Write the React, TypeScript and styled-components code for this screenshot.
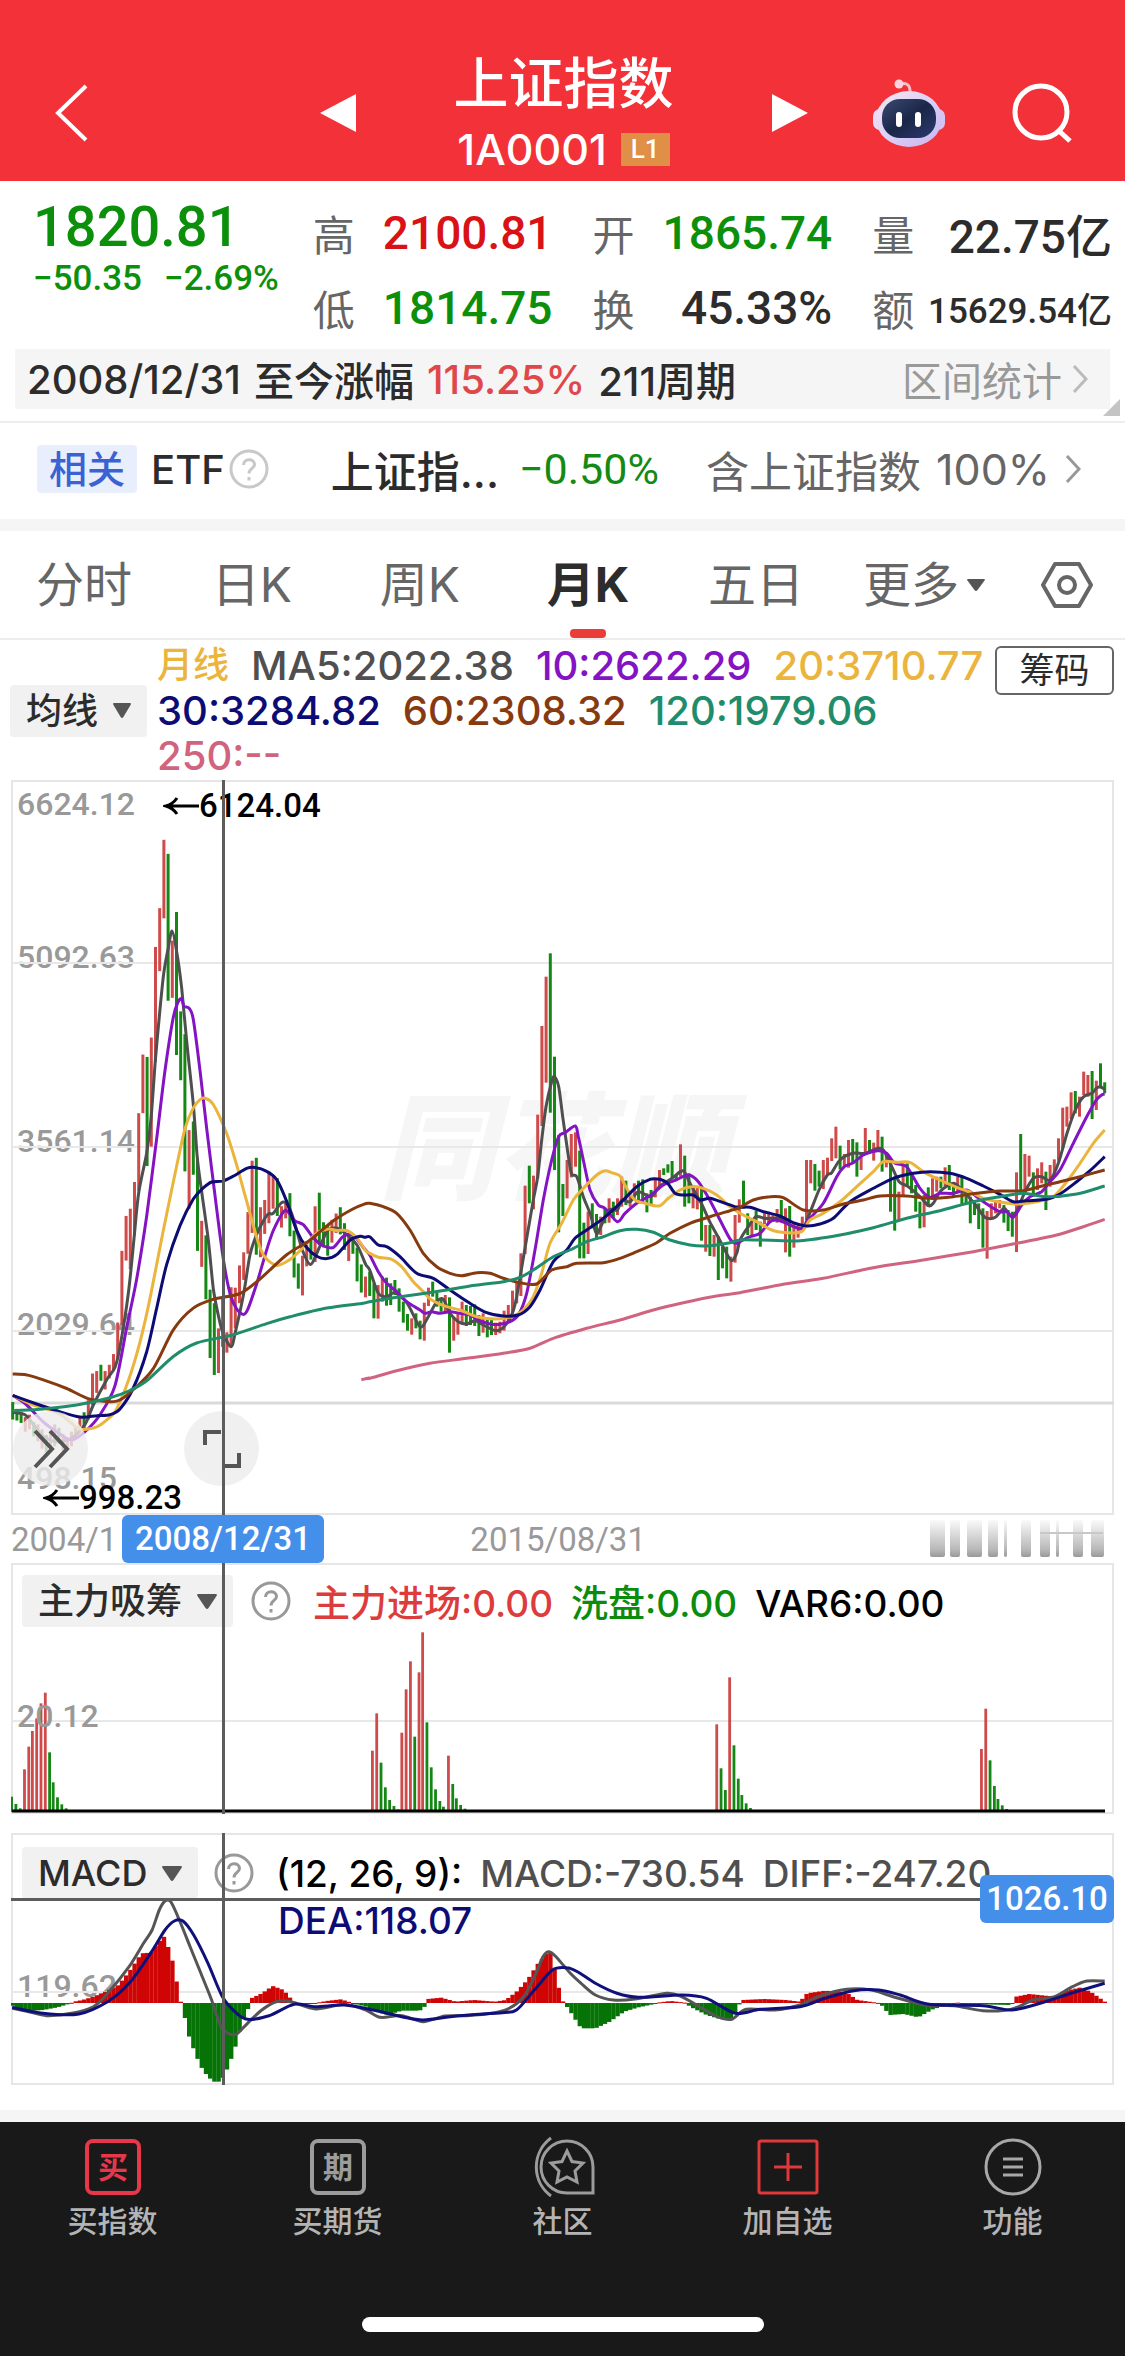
import React, { useState } from "react"
import styled, { createGlobalStyle } from "styled-components"

const GlobalStyle = createGlobalStyle`
  * {
    box-sizing: border-box;
  }
  body {
    margin: 0;
    background: #fff;
    color: #2c2c2c;
    font-family: Inter, "Noto Sans CJK SC", sans-serif;
    font-weight: 500;
  }
  button,
  select {
    font: inherit;
    color: inherit;
    border: 0;
    padding: 0;
    background: none;
    appearance: none;
  }
  svg {
    display: block;
  }
`

const colors = {
  up: "#cf4a4a",
  down: "#148714",
  ma5: "#4f4f4f",
  ma10: "#8413c4",
  ma20: "#ebb43c",
  ma30: "#0c0c74",
  ma60: "#873a10",
  ma120: "#1f8d6b",
  ma250: "#d0647f",
}

/* ---------- data ---------- */

// every stretch of the series keeps its own origin and units per pixel
type Segment = {
  x: number
  y: number
  sx: number
  sy: number
}
const early: Segment = { x: 0, y: 770, sx: 3, sy: 2.063 }
const middle: Segment = { x: 370, y: 900, sx: 3, sy: 3 }
const late: Segment = { x: 740, y: 1000, sx: 3, sy: 3 }
const power: Segment = { x: 0, y: 1500, sx: 1.394, sy: 3 }
const macd: Segment = { x: 0, y: 1820, sx: 1.394, sy: 3 }

const STEP = 4.2
const FIRST = 12.7

const sticks: { segment: Segment; start: number; data: string }[] = [
  {
    segment: early,
    start: 0,
    data: `g1304-1340 g1318-1342 g1325-1347 r1335-1365 r1330-1360 g1345-1375 r1350-1385 r1360-1400
    g1372-1408 r1365-1400 r1350-1395 g1357-1390 r1370-1405 r1380-1398 r1365-1395 r1355-1380 r1335-1355
    g1325-1360 r1300-1340 r1245-1310 r1240-1285 g1227-1260 r1240-1278 r1227-1255 r1205-1240 r1140-1215
    r992-1145 r920-1012 r905-1030 r850-960 r708-868 r587-708 g592-817 r552-777 r365-602 r285-415
    r144-306 g173-476 r352-470 g293-588 g498-640 g545-828 r743-905 g725-835 g800-992 r930-1025
    g960-1092 g1072-1213 g1100-1248 r1152-1244 g1090-1190 r1160-1202 r1067-1187 r1068-1152 r1022-1100
    r995-1052 r912-998 r806-955 g800-1000 r902-1005 r887-957 r828-935 r836-905 g842-920 r900-944
    r895-925 g873-962 g950-1047 g1018-1070 r1002-1084 r975-1024 g968-1010 r900-1015 g872-980 g933-985
    g940-1002 r928-975 r915-955 g902-958 g935-990 r955-1013 g960-998 g985-1055 g1020-1078 r1045-1088
    g1035-1085`,
  },
  {
    segment: middle,
    start: 86,
    data: `g1150-1255 r1155-1256 r1130-1205 g1133-1217 g1150-1215 g1140-1185 g1165-1235 g1205-1268
    g1242-1292 r1255-1304 g1240-1285 g1262-1318 r1208-1322 r1163-1218 g1145-1190 g1178-1220 g1195-1235
    r1185-1240 g1192-1358 r1250-1322 r1240-1304 r1205-1272 g1215-1278 g1218-1275 g1213-1278 g1245-1308
    r1240-1298 g1252-1312 g1260-1305 r1268-1305 r1265-1300 r1232-1292 r1215-1262 r1172-1240 r1145-1210
    r1060-1188 r857-1062 g797-910 r827-928 r644-835 r378-678 r230-548 g160-638 g470-810 g705-997
    g852-948 r780-895 r702-832 r697-800 g752-1075 g968-1075 r935-1062 g910-985 g942-1020 r950-1005
    g925-970 r895-968 g905-955 r895-945 r830-920 g842-915 r878-920 r850-900 g842-905 g838-912
    g880-937 g870-915 r840-892 r810-865 g805-825 g793-818 g783-835 g825-840 r733-830 g767-920
    g820-910 r860-925 r862-928 g865-1022 r975-1055 g975-1068 r1005-1070 g1010-1140 g1040-1105
    g1040-1135 r1070-1145 r945-1088 r898-968`,
  },
  {
    segment: late,
    start: 174,
    data: `g542-625 g640-705 r665-705 g632-690 g665-740 r640-672 r635-672 r640-665 r627-668 g600-665
    r625-757 g618-770 r668-743 r675-713 r650-693 r480-660 r480-550 g492-572 g512-560 r480-567
    r473-525 r415-483 r380-475 g437-508 r462-500 r420-503 g417-487 g427-530 r462-510 r384-462
    g420-462 r428-482 r390-455 g410-515 r465-502 g480-635 g530-692 r575-662 r495-590 g490-555
    g520-580 g555-635 g605-685 r585-682 g562-620 r535-600 r530-575 g530-565 r502-560 g495-570
    g560-592 r530-580 g530-612 g575-610 g590-670 g600-645 g610-687 g625-743 r633-776 r610-655
    r605-640 r600-625 g615-668 g630-693 g635-710 r517-756 g402-580 r462-570 r467-530 g517-590
    r505-570 r487-550 g515-630 r495-560 r478-530 r415-482 r323-445 r320-380 r277-357 g273-340
    r290-350 r215-285 r225-290 g213-357 r242-330 g190-265 g247-280`,
  },
]

const averages: { color: string; parts: [Segment, string][] }[] = [
  {
    color: colors.ma250,
    parts: [
      [early, "1084,1258 1106,1254"],
      [middle, "-1,1435 80,1412 180,1390 290,1375 400,1360 480,1345 550,1315 650,1285 750,1260 850,1230 940,1208 1040,1188 1110,1178"],
      [late, "130,853 250,835 400,803 550,780 700,755 830,730 950,705 1030,680 1094,658"],
    ],
  },
  {
    color: colors.ma5,
    parts: [
      [early, "38,1325 75,1330 100,1350 130,1375 170,1385 215,1378 255,1350 280,1310 320,1258 345,1232 360,1190 385,1080 403,960 416,872 440,790 453,720 466,600 479,500 491,420 504,370 516,332 529,370 545,450 560,560 580,690 592,800 605,870 625,970 640,1070 655,1125 668,1160 693,1190 706,1160 731,1080 750,1000 769,960 794,925 807,915 819,915 844,893 857,893 869,905 882,930 907,990 932,1020 958,985 983,950 1008,945 1034,955 1071,980 1097,1020"],
      [middle, "-1,1110 25,1180 50,1190 75,1178 112,1210 150,1280 175,1250 200,1205 220,1198 240,1240 265,1265 290,1272 315,1262 340,1275 377,1292 402,1280 427,1240 440,1190 464,1050 490,900 503,830 515,720 528,620 545,545 553,530 566,560 578,650 591,740 604,820 620,830 640,890 660,940 679,1000 692,980 717,930 742,930 755,900 780,905 805,875 843,890 868,860 906,835 931,815 943,815 960,850 994,910 1019,965 1044,1010 1082,1080 1100,1060"],
      [late, "0,720 25,680 48,650 73,655 98,655 124,655 149,675 187,685 205,650 237,570 262,525 275,518 300,480 338,460 376,460 413,445 430,450 451,490 477,545 502,558 540,590 565,617 580,610 603,572 640,550 666,570 703,610 728,645 741,655 766,652 792,625 810,645 829,635 855,575 880,535 905,530 930,540 955,490 981,400 1006,330 1031,290 1056,280 1069,265 1081,260 1094,268"],
    ],
  },
  {
    color: colors.ma10,
    parts: [
      [early, "38,1290 80,1310 130,1345 180,1370 215,1382 255,1365 300,1330 345,1270 380,1150 410,1050 440,920 470,760 495,620 520,510 535,478 545,472 552,487 568,492 580,515 600,620 620,740 640,850 668,1000 690,1080 710,1112 731,1123 745,1110 770,1060 800,990 820,950 850,912 862,910 885,930 910,938 940,965 965,980 1000,985 1030,962 1060,960 1090,985"],
      [middle, "-1,1065 25,1115 50,1150 80,1175 110,1205 150,1230 165,1240 185,1235 210,1240 240,1235 270,1240 300,1245 330,1262 360,1272 390,1273 420,1265 445,1245 470,1180 495,1050 520,900 545,780 566,710 585,698 616,678 625,710 640,780 660,870 685,915 705,925 742,965 765,940 800,910 843,885 880,855 918,840 955,825 985,845 1019,900 1050,960 1082,1020 1100,1030"],
      [late, "5,722 30,710 60,700 90,665 110,660 140,670 187,688 205,660 250,610 290,530 313,500 340,488 370,465 413,452 440,460 465,490 500,500 540,565 570,592 600,580 640,580 680,570 710,590 745,615 780,635 800,635 820,652 845,615 870,590 905,575 930,545 960,510 1000,430 1040,350 1069,300 1085,285 1094,282"],
    ],
  },
  {
    color: colors.ma20,
    parts: [
      [early, "38,1290 100,1310 170,1325 210,1345 240,1360 290,1355 330,1335 350,1318 385,1260 420,1180 450,1090 490,950 520,850 555,740 580,697 600,680 615,677 640,690 680,750 710,815 740,890 775,975 795,1005 830,1022 870,1010 910,985 950,955 985,947 1010,950 1040,950 1070,965 1095,990"],
      [middle, "-1,1060 25,1072 65,1078 95,1100 130,1145 160,1175 185,1200 230,1220 270,1230 320,1250 380,1257 430,1248 460,1230 490,1190 515,1120 540,1030 575,970 610,900 640,865 680,825 705,812 725,818 750,828 770,865 795,900 825,910 868,918 895,895 930,870 965,860 1000,865 1040,885 1080,920"],
      [late, "0,640 50,665 95,690 140,698 185,695 210,660 250,640 300,605 350,560 400,515 430,485 470,487 510,487 550,515 600,540 650,562 700,580 730,595 775,605 830,612 890,605 940,590 980,545 1020,490 1060,430 1094,390"],
    ],
  },
  {
    color: colors.ma30,
    parts: [
      [early, "38,1290 110,1308 170,1322 240,1335 290,1332 330,1330 360,1318 400,1275 440,1200 470,1110 500,1020 540,940 580,885 610,862 635,850 668,848 700,838 740,822 765,820 800,828 830,845 860,890 890,950 920,985 950,1003 980,1008 1010,1000 1050,970 1080,962 1095,964"],
      [middle, "-1,1010 25,1035 50,1040 90,1070 140,1120 190,1135 240,1170 300,1210 350,1238 400,1248 445,1245 480,1220 510,1170 550,1085 590,1050 615,1015 650,990 700,955 750,910 800,860 840,838 870,838 893,850 915,880 940,885 970,885 990,900 1020,895 1060,908 1095,920"],
      [late, "0,622 30,622 70,635 120,648 160,668 200,678 240,672 280,655 330,605 400,565 460,535 520,520 570,515 630,520 680,535 730,558 780,583 820,605 860,602 920,598 960,582 1010,545 1050,512 1094,470"],
    ],
  },
  {
    color: colors.ma60,
    parts: [
      [early, "38,1246 80,1248 130,1258 200,1276 270,1298 350,1302 400,1278 460,1235 520,1155 580,1110 640,1092 720,1080 780,1050 860,1000 930,970 1000,930 1060,905 1095,895"],
      [middle, "-1,910 40,920 80,940 120,990 160,1060 200,1100 240,1120 275,1127 320,1118 360,1120 400,1135 450,1148 500,1152 545,1110 590,1100 620,1090 700,1088 750,1075 800,1055 860,1028 900,1000 960,970 1020,950 1080,932"],
      [late, "0,622 40,600 90,590 130,593 190,630 250,630 310,612 370,600 420,588 500,588 570,595 640,590 710,580 780,573 850,572 910,557 960,545 1020,530 1094,510"],
    ],
  },
  {
    color: colors.ma120,
    parts: [
      [early, "38,1322 130,1318 230,1310 330,1295 390,1280 440,1260 520,1210 590,1182 700,1165 800,1142 870,1128 980,1110 1090,1100"],
      [middle, "-1,1205 60,1195 150,1182 230,1170 300,1158 400,1145 450,1132 490,1110 550,1070 600,1050 650,1025 700,1010 750,992 800,988 850,997 900,1020 960,1035 1010,1038 1080,1028"],
      [late, "0,720 60,720 180,722 300,705 400,683 500,655 600,632 700,605 780,590 850,580 920,590 1010,582 1094,558"],
    ],
  },
]

const powerBars = `16g890 22g912 28g925 34r808 40r740 45r693 51r655 57r610 63r578 69g757 74g847 80g892 86g913 92g925
  519r752 525r640 531g788 537g862 543g900 549g918 555g928 560r698 566r568 572r484 578g710 584r517 589r397
  595g667 601g802 607g868 613g903 618g920 625r767 631g852 636g895 642g915 648g926
  999r673 1005g805 1011g870 1017r532 1023g736 1029g836 1034g885 1040g910 1046g924
  1368r747 1374r626 1380g781 1386g858 1391g897 1397g916 1403g927`

const histogram = "17,556 25,570 40,573 60,570 80,562 97,551 103,545 115,540 130,530 150,512 165,495 180,455 197,400 210,398 218,375 228,348 238,400 245,470 250,540 253,548 256,575 262,640 272,700 280,740 288,765 297,785 305,785 312,770 320,730 328,680 337,610 347,560 350,535 365,520 380,498 395,510 405,535 412,549 440,549 455,543 475,538 490,548 495,552 510,560 525,575 540,585 560,572 585,572 593,558 596,537 615,533 635,545 660,540 690,545 705,540 720,515 735,480 750,430 762,400 768,395 775,470 783,540 787,550 795,575 810,625 830,625 850,605 870,575 890,562 912,552 916,548 935,543 955,548 962,560 985,585 1005,598 1020,598 1030,555 1035,540 1065,537 1095,540 1115,545 1125,520 1150,512 1180,518 1195,540 1225,549 1230,558 1240,585 1260,582 1280,592 1300,568 1320,555 1335,548 1345,552 1410,555 1416,530 1435,522 1470,530 1490,510 1505,503 1520,515 1540,545"

const diffLine = "17,565 40,575 65,587 100,580 130,560 150,520 180,440 200,370 212,330 222,270 230,243 238,245 250,300 265,380 280,460 295,540 308,620 320,642 330,642 345,610 365,570 385,545 405,545 440,567 480,553 510,570 530,592 560,587 590,605 620,588 650,587 690,578 710,565 730,530 745,470 757,410 765,395 775,410 795,460 810,490 830,525 855,540 885,537 930,520 950,530 975,560 1000,590 1020,598 1040,568 1080,570 1115,555 1140,530 1180,508 1215,510 1245,530 1290,555 1330,557 1370,572 1410,568 1440,540 1470,530 1495,500 1515,483 1540,483"

const deaLine = "17,562 60,580 110,582 150,545 180,490 210,400 230,330 243,303 255,303 270,345 290,430 310,530 330,580 345,598 375,587 410,553 440,560 480,555 520,570 560,590 590,600 640,587 700,578 720,570 745,510 770,450 790,443 805,455 830,490 860,520 890,532 950,525 985,535 1025,580 1060,568 1115,560 1150,535 1190,512 1225,510 1255,525 1295,553 1370,557 1410,570 1450,550 1500,515 1540,490"

type Point = [number, number]

function project(segment: Segment, points: string): Point[] {
  return points.split(" ").map(pair => {
    const [u, v] = pair.split(",").map(Number)
    return [segment.x + u / segment.sx, segment.y + v / segment.sy]
  })
}

// smooth path through the points, control points taken from the neighbours
function curve(points: Point[]): string {
  let d = `M${points[0][0]} ${points[0][1]}`
  for (let i = 0; i < points.length - 1; i++) {
    const before = points[i - 1] || points[i]
    const from = points[i]
    const to = points[i + 1]
    const after = points[i + 2] || to
    const c = [
      from[0] + (to[0] - before[0]) / 7,
      from[1] + (to[1] - before[1]) / 7,
      to[0] - (after[0] - from[0]) / 7,
      to[1] - (after[1] - from[1]) / 7,
      to[0],
      to[1],
    ]
    d += `C${c.map(n => n.toFixed(1)).join(" ")}`
  }
  return d
}

function heightAt(points: Point[], x: number): number {
  const next = points.findIndex(p => p[0] >= x)
  if (next <= 0) return points[next === 0 ? 0 : points.length - 1][1]
  const [x0, y0] = points[next - 1]
  const [x1, y1] = points[next]
  return y0 + ((y1 - y0) * (x - x0)) / (x1 - x0)
}

/* ---------- header ---------- */

const Header = styled.header`
  display: grid;
  grid-template-columns: 1fr auto 1fr;
  align-items: end;
  height: 181px;
  padding: 0 52px 0 54px;
  background: #f23138;
  color: #fff;
`
const HeaderSide = styled.div`
  display: flex;
  justify-content: space-between;
  align-items: center;
  height: 136px;
`
const HeaderButton = styled.button`
  display: block;
  cursor: pointer;
`
const Titles = styled.div`
  display: flex;
  flex-direction: column;
  align-items: center;
  width: 416px;
  height: 136px;
`
const Title = styled.h1`
  margin: 0;
  font-size: 55px;
  line-height: 76px;
  font-weight: 500;
`
const Code = styled.div`
  display: flex;
  align-items: center;
  gap: 14px;
  font-size: 43px;
  line-height: 56px;
`
const Level = styled.span`
  padding: 0 10px;
  background: #df8f46;
  font-family: Roboto, sans-serif;
  font-size: 26px;
  line-height: 33px;
`

/* ---------- quote ---------- */

type toneProps = {
  $color?: string
}

const Quote = styled.section`
  display: grid;
  grid-template-columns: repeat(4, minmax(0, 1fr));
  column-gap: 40px;
  height: 168px;
  padding: 14px 13px 0 33px;
  font-family: Roboto, "Noto Sans CJK SC", sans-serif;
`
const Price = styled.div`
  color: #0c900c;
  font-size: 56px;
  line-height: 64px;
`
const Change = styled.div`
  display: flex;
  gap: 22px;
  color: #0c900c;
  font-size: 35px;
  line-height: 40px;
  white-space: nowrap;
`
const Pair = styled.div`
  display: flex;
  justify-content: space-between;
  align-items: center;
  height: 75px;
  white-space: nowrap;
`
const PairName = styled.span`
  color: #666;
  font-size: 42px;
  font-weight: 400;
`
const PairValue = styled.span<toneProps & { $small?: boolean }>`
  color: ${props => props.$color || "#2c2c2c"};
  font-size: ${props => (props.$small ? 35 : 46)}px;
`

const Interval = styled.section`
  display: flex;
  align-items: center;
  gap: 13px;
  position: relative;
  height: 60px;
  margin: 0 15px;
  padding: 0 22px 0 12px;
  background: #f5f5f5;
  font-size: 40px;
  white-space: nowrap;
`
const Tint = styled.span<toneProps>`
  color: ${props => props.$color};
`
const IntervalLink = styled.a`
  display: flex;
  align-items: center;
  gap: 10px;
  margin-left: auto;
  color: #999;
  font-weight: 400;
  text-decoration: none;
`
const Corner = styled.svg`
  position: absolute;
  right: -10px;
  bottom: -7px;
`

const Related = styled.section`
  display: flex;
  align-items: center;
  height: 98px;
  margin-top: 12px;
  padding: 0 44px 4px 37px;
  border-top: 2px solid #ededed;
  font-size: 40px;
  white-space: nowrap;
`
const Tag = styled.span`
  margin-right: 14px;
  padding: 0 12px;
  border-radius: 4px;
  background: #e9eefd;
  color: #3b62d2;
  font-size: 38px;
  line-height: 48px;
`
const Fund = styled.span`
  margin-left: 62px;
  font-size: 43px;
`
const FundChange = styled.span`
  margin-left: 20px;
  color: #148a14;
  font-family: Roboto, sans-serif;
  font-size: 43px;
  font-weight: 400;
`
const Holding = styled.a`
  display: flex;
  align-items: center;
  gap: 15px;
  margin-left: auto;
  color: #666;
  font-size: 43px;
  font-weight: 400;
  text-decoration: none;
`
const Band = styled.div`
  height: 12px;
  background: #f5f5f5;
`

/* ---------- tabs ---------- */

const Tabs = styled.nav`
  display: grid;
  grid-template-columns: repeat(6, 168fr) 117fr;
  height: 109px;
  border-bottom: 2px solid #ededed;
`
const Tab = styled.button<{ $active?: boolean }>`
  display: flex;
  flex-direction: column;
  align-items: center;
  justify-content: flex-end;
  gap: 7px;
  color: ${props => (props.$active ? "#2c2c2c" : "#666")};
  font-size: 48px;
  font-weight: ${props => (props.$active ? 700 : 400)};
  line-height: 74px;
  cursor: pointer;

  &::after {
    content: "";
    width: 36px;
    height: 9px;
    border-radius: 4px;
    background: ${props => (props.$active ? "#ea3c38" : "transparent")};
  }
`
const TabText = styled.span`
  display: flex;
  align-items: center;
  gap: 8px;
`

/* ---------- indicator bars ---------- */

const Averages = styled.section`
  display: grid;
  grid-template-columns: 137px 1fr 119px;
  gap: 10px;
  padding: 3px 11px 4px 10px;
  height: 140px;
`
const AverageList = styled.div`
  display: flex;
  flex-wrap: wrap;
  align-content: flex-start;
  column-gap: 22px;
  margin-right: -12px;
  font-size: 40px;
  line-height: 45px;
  white-space: nowrap;
`
const AverageName = styled.span`
  color: ${colors.ma20};
  font-size: 36px;
`
const Break = styled.span`
  width: 100%;
`
const ChipsButton = styled.button`
  height: 49px;
  margin-top: 3px;
  border: 2px solid #666;
  border-radius: 6px;
  font-size: 35px;
  font-weight: 400;
  line-height: 45px;
  cursor: pointer;
`
const Picker = styled.label`
  display: flex;
  align-items: center;
  gap: 14px;
  height: 52px;
  padding: 0 16px;
  border-radius: 4px;
  background: #f1f1f1;
  font-size: 36px;
`
const AveragePicker = styled(Picker)`
  align-self: center;
  justify-content: center;
`
const Select = styled.select`
  cursor: pointer;
`

/* ---------- panels ---------- */

const Panel = styled.section<{ $height: number; $gap?: number }>`
  position: relative;
  height: ${props => props.$height}px;
  margin: ${props => props.$gap || 0}px 11px 0;
  border: 2px solid #e6e6e6;
`
const Plot = styled.svg`
  position: absolute;
  top: -2px;
  left: -2px;
  width: calc(100% + 4px);
  height: calc(100% + 4px);
`
const Crosshair = styled.div`
  position: absolute;
  top: -2px;
  bottom: -2px;
  left: 19%;
  width: 3px;
  background: #5c5c5c;
`
const PriceLine = styled.div`
  position: absolute;
  top: 63px;
  left: -2px;
  right: 0;
  height: 3px;
  background: #5c5c5c;
`
const AxisLabel = styled.span<{ $top: number }>`
  position: absolute;
  top: ${props => props.$top}px;
  left: 4px;
  color: #999;
  font-family: Roboto, sans-serif;
  font-size: 32px;
  line-height: 40px;
`
const Extreme = styled.span<{ $top: number; $left: number }>`
  position: absolute;
  top: ${props => props.$top}px;
  left: ${props => props.$left}px;
  display: flex;
  align-items: center;
  color: #000;
  font-family: Roboto, sans-serif;
  font-size: 33px;
  line-height: 40px;
`
const Watermark = styled.span`
  position: absolute;
  top: 296px;
  left: 366px;
  color: #f6f6f6;
  font-size: 116px;
  font-style: italic;
  font-weight: 900;
  line-height: 140px;
`
const RoundButton = styled.button<{ $left: string }>`
  position: absolute;
  left: ${props => props.$left};
  bottom: 27px;
  display: flex;
  align-items: center;
  justify-content: center;
  width: 75px;
  height: 75px;
  border-radius: 50%;
  background: rgba(236, 236, 236, 0.8);
  cursor: pointer;
`
const Dates = styled.div`
  position: relative;
  display: flex;
  align-items: center;
  height: 48px;
  margin: 0 11px;
  color: #999;
  font-family: Roboto, sans-serif;
  font-size: 33px;
  font-weight: 400;
`
const Bubble = styled.span`
  position: absolute;
  border-radius: 6px;
  background: #438fea;
  color: #fff;
  font-family: Roboto, sans-serif;
  font-size: 33px;
  font-weight: 500;
  line-height: 48px;
  text-align: center;
`
const DateBubble = styled(Bubble)`
  left: 111px;
  top: 0;
  width: 202px;
`
const LevelBubble = styled(Bubble)`
  right: -2px;
  top: 40px;
  width: 134px;
`
const MiddleDate = styled.span`
  margin-left: 353px;
`
const Smear = styled.svg`
  margin-left: auto;
  margin-right: 9px;
`
const Legend = styled.div<{ $top: number }>`
  position: relative;
  display: flex;
  align-items: center;
  padding-top: ${props => props.$top}px;
  padding-left: 9px;
  white-space: nowrap;
`
const Readings = styled.div`
  display: flex;
  align-items: baseline;
  gap: 18px;
  margin-left: 22px;
  color: #000;
  font-size: 37px;
`
const SecondReading = styled.div`
  position: relative;
  padding-left: 265px;
  color: ${colors.ma30};
  font-size: 37px;
  line-height: 44px;
`
const HelpButton = styled.button<{ $left: number }>`
  margin-left: ${props => props.$left}px;
  cursor: pointer;
`

/* ---------- bottom ---------- */

const PageEnd = styled(Band)`
  margin-top: 25px;
`
const Bottom = styled.footer`
  height: 234px;
  background: #191919;
  color: #b4b4b4;
`
const BottomNav = styled.nav`
  display: grid;
  grid-template-columns: repeat(5, 1fr);
  height: 195px;
  padding-top: 13px;
`
const BottomLink = styled.a`
  display: flex;
  flex-direction: column;
  align-items: center;
  color: inherit;
  font-size: 30px;
  line-height: 44px;
  text-decoration: none;
`
const HomeBar = styled.div`
  width: 402px;
  height: 15px;
  margin: 0 auto;
  border-radius: 8px;
  background: #fff;
`

/* ---------- icons ---------- */

function Chevron({ color, size }: { color: string; size: number }) {
  return (
    <svg width={size} height={size * 2} viewBox="0 0 16 32" fill="none" stroke={color} strokeWidth="3">
      <path d="M2 3L14 16L2 29" />
    </svg>
  )
}

function Triangle({ width, height }: { width: number; height: number }) {
  return (
    <svg width={width} height={height} viewBox="0 0 20 16" preserveAspectRatio="none" fill="#555">
      <path d="M1 0H19Q20.500 0 19.500 2L11.500 15Q10 17 8.500 15L0.500 2Q-0.500 0 1 0Z" />
    </svg>
  )
}

function Question({ color }: { color: string }) {
  return (
    <svg width="40" height="40" viewBox="0 0 40 40" fill="none" stroke={color} strokeWidth="3">
      <circle cx="20" cy="20" r="18" />
      <path d="M14.500 16C14.500 9 25.500 9 25.500 15.500C25.500 19.500 20 19.500 20 24.500" />
      <path d="M20 28V31.500" />
    </svg>
  )
}

function Robot() {
  return (
    <svg width="74" height="70" viewBox="0 0 74 70">
      <defs>
        <linearGradient id="shell" x1="0" y1="0" x2="1" y2="1">
          <stop offset="0" stopColor="#fbe6f0" />
          <stop offset="0.550" stopColor="#d9cdf6" />
          <stop offset="1" stopColor="#c9b4ee" />
        </linearGradient>
        <linearGradient id="face" x1="0" y1="0" x2="1" y2="1">
          <stop offset="0" stopColor="#3a4a72" />
          <stop offset="0.500" stopColor="#1b2748" />
          <stop offset="1" stopColor="#2b3a70" />
        </linearGradient>
      </defs>
      <path d="M28 6Q39 3 38 16" fill="none" stroke="#f6bccb" strokeWidth="3" />
      <circle cx="27" cy="6" r="4.500" fill="#fbd3dc" />
      <rect x="1" y="31" width="14" height="21" rx="7" fill="#e6dcfa" />
      <rect x="59" y="31" width="14" height="21" rx="7" fill="#d3c4f4" />
      <ellipse cx="37" cy="41" rx="33" ry="28" fill="url(#shell)" />
      <rect x="10" y="21" width="54" height="39" rx="18" fill="url(#face)" />
      <rect x="24" y="34" width="6" height="15" rx="3" fill="#fff" />
      <rect x="43" y="34" width="6" height="15" rx="3" fill="#fff" />
    </svg>
  )
}

function BoxIcon({ glyph, color }: { glyph: string; color: string }) {
  return (
    <svg width="64" height="64" viewBox="0 0 64 64">
      <rect x="6" y="6" width="52" height="52" rx="6" fill="none" stroke={color} strokeWidth="4" />
      <text x="32" y="43" fill={color} fontSize="30" fontWeight="700" textAnchor="middle">
        {glyph}
      </text>
    </svg>
  )
}

function CommunityIcon() {
  return (
    <svg width="64" height="64" viewBox="0 0 64 64" fill="none" stroke="#9c9c9c" strokeWidth="3">
      <path d="M62 32V58H36A26 26 0 1 1 62 32Z" />
      <path d="M20 3A36 36 0 0 0 20 61" />
      <path d="M36 16L41 26.500L52 28L44 36L46 47L36 42L26 47L28 36L20 28L31 26.500Z" />
    </svg>
  )
}

function PlusIcon() {
  return (
    <svg width="64" height="64" viewBox="0 0 64 64" fill="none" stroke="#e0393c" strokeWidth="3">
      <rect x="3" y="6" width="58" height="52" rx="2" />
      <path d="M32 18V46M18 32H46" />
    </svg>
  )
}

function MenuIcon() {
  return (
    <svg width="64" height="64" viewBox="0 0 64 64" fill="none" stroke="#a8a8a8" strokeWidth="3">
      <circle cx="32" cy="32" r="27" />
      <path d="M22 24H42M22 32H42M22 40H42" />
    </svg>
  )
}

function LeftArrow() {
  return (
    <svg width="36" height="20" viewBox="0 0 36 20" fill="none" stroke="#000" strokeWidth="3">
      <path d="M36 10H3M14 2Q10 8 3 10Q10 12 14 18" />
    </svg>
  )
}

/* ---------- charts ---------- */

function CandlePlot() {
  return (
    <Plot viewBox="11 780 1103 735" preserveAspectRatio="none" aria-label="月K">
      {[963, 1147, 1331].map(y => (
        <path key={y} d={`M11 ${y}H1114`} stroke="#e8e8e8" strokeWidth="2" />
      ))}
      <path d="M11 1403H1114" stroke="#dadada" strokeWidth="3" />
      {sticks.map(({ segment, start, data }) =>
        data.split(/\s+/).map((stick, i) => {
          const [top, bottom] = stick
            .slice(1)
            .split("-")
            .map(v => segment.y + Number(v) / segment.sy)
          return (
            <rect
              key={start + i}
              x={FIRST + (start + i) * STEP - 1.5}
              y={top}
              width="3"
              height={bottom - top}
              fill={stick[0] === "r" ? colors.up : colors.down}
            />
          )
        })
      )}
      {averages.map(({ color, parts }) => (
        <path
          key={color}
          d={curve(parts.flatMap(([segment, points]) => project(segment, points)))}
          fill="none"
          stroke={color}
          strokeWidth="3"
          strokeLinejoin="round"
        />
      ))}
    </Plot>
  )
}

function PowerPlot() {
  const base = 1812
  return (
    <Plot viewBox="11 1563 1103 251" preserveAspectRatio="none" aria-label="主力吸筹">
      <path d="M11 1721H1114" stroke="#e8e8e8" strokeWidth="2" />
      {powerBars.split(/\s+/).map(bar => {
        const [u, v] = bar.split(/[rg]/).map(Number)
        const top = power.y + v / power.sy
        return (
          <rect
            key={u}
            x={u / power.sx - 1.3}
            y={top}
            width="2.8"
            height={base - top}
            fill={bar.includes("r") ? colors.up : colors.down}
          />
        )
      })}
      <path d="M12 1811H1105" stroke="#000" strokeWidth="3" />
    </Plot>
  )
}

function MacdPlot() {
  const zero = 2003
  const outline = project(macd, histogram)
  return (
    <Plot viewBox="11 1833 1103 252" preserveAspectRatio="none" aria-label="MACD">
      <path d="M11 1992H1114" stroke="#e8e8e8" strokeWidth="2" />
      {Array.from({ length: 261 }, (_, i) => {
        const x = FIRST + i * STEP
        const y = heightAt(outline, x)
        const size = Math.max(1, Math.abs(y - zero))
        return (
          <rect
            key={i}
            x={x - 2.1}
            y={Math.min(y, zero)}
            width="4.4"
            height={size}
            fill={y < zero ? "#cf0505" : "#067306"}
          />
        )
      })}
      <path d={curve(project(macd, diffLine))} fill="none" stroke="#555" strokeWidth="3" />
      <path d={curve(project(macd, deaLine))} fill="none" stroke="#10107c" strokeWidth="3" />
    </Plot>
  )
}

const smears = [
  [0, 15],
  [20, 10],
  [37, 15],
  [58, 10],
  [74, 3],
  [91, 10],
  [110, 10],
  [126, 3],
  [143, 10],
  [161, 13],
]

const tabs = ["分时", "日K", "周K", "月K", "五日", "更多"]

export default function App(): React.JSX.Element {
  const [active, setActive] = useState("月K")
  return (
    <>
      <GlobalStyle />
      <Header>
        <HeaderSide>
          <HeaderButton aria-label="返回">
            <svg width="36" height="60" viewBox="0 0 36 60" fill="none" stroke="#fff" strokeWidth="4">
              <path d="M32 3L4 30L32 57" />
            </svg>
          </HeaderButton>
          <HeaderButton aria-label="上一个">
            <svg width="36" height="38" viewBox="0 0 36 38" fill="#fff">
              <path d="M36 0V38L0 19Z" />
            </svg>
          </HeaderButton>
        </HeaderSide>
        <Titles>
          <Title>上证指数</Title>
          <Code>
            1A0001 <Level>L1</Level>
          </Code>
        </Titles>
        <HeaderSide>
          <HeaderButton aria-label="下一个">
            <svg width="36" height="38" viewBox="0 0 36 38" fill="#fff">
              <path d="M0 0V38L36 19Z" />
            </svg>
          </HeaderButton>
          <HeaderButton aria-label="助手">
            <Robot />
          </HeaderButton>
          <HeaderButton aria-label="搜索">
            <svg width="62" height="62" viewBox="0 0 62 62" fill="none" stroke="#fff" strokeWidth="5">
              <circle cx="30" cy="30" r="26" />
              <path d="M47 48L59 59" />
            </svg>
          </HeaderButton>
        </HeaderSide>
      </Header>

      <Quote>
        <div>
          <Price>1820.81</Price>
          <Change>
            <span>−50.35</span>
            <span>−2.69%</span>
          </Change>
        </div>
        <div>
          <Pair>
            <PairName>高</PairName>
            <PairValue $color="#d91216">2100.81</PairValue>
          </Pair>
          <Pair>
            <PairName>低</PairName>
            <PairValue $color="#0c900c">1814.75</PairValue>
          </Pair>
        </div>
        <div>
          <Pair>
            <PairName>开</PairName>
            <PairValue $color="#0c900c">1865.74</PairValue>
          </Pair>
          <Pair>
            <PairName>换</PairName>
            <PairValue>45.33%</PairValue>
          </Pair>
        </div>
        <div>
          <Pair>
            <PairName>量</PairName>
            <PairValue>22.75亿</PairValue>
          </Pair>
          <Pair>
            <PairName>额</PairName>
            <PairValue $small>15629.54亿</PairValue>
          </Pair>
        </div>
      </Quote>

      <Interval>
        <span>2008/12/31</span>
        <span>至今涨幅</span>
        <Tint $color="#e0474a">115.25%</Tint>
        <span>211周期</span>
        <IntervalLink href="#stats">
          区间统计
          <Chevron color="#bbb" size={16} />
        </IntervalLink>
        <Corner width="17" height="17" viewBox="0 0 17 17" fill="#c4c4c4">
          <path d="M17 0V17H0Z" />
        </Corner>
      </Interval>

      <Related>
        <Tag>相关</Tag>
        <span>ETF</span>
        <HelpButton $left={4} aria-label="ETF 说明">
          <Question color="#c8c8c8" />
        </HelpButton>
        <Fund>上证指...</Fund>
        <FundChange>−0.50%</FundChange>
        <Holding href="#etf">
          <span>含上证指数</span>
          <span>100%</span>
          <Chevron color="#999" size={16} />
        </Holding>
      </Related>
      <Band />

      <Tabs>
        {tabs.map(tab => (
          <Tab key={tab} $active={tab === active} onClick={() => setActive(tab)}>
            <TabText>
              {tab}
              {tab === "更多" && <Triangle width={18} height={12} />}
            </TabText>
          </Tab>
        ))}
        <Tab aria-label="设置">
          <TabText>
            <svg width="52" height="74" viewBox="0 0 52 74" fill="none" stroke="#666" strokeWidth="4">
              <path d="M14 16H38L50 37L38 58H14L2 37Z" strokeLinejoin="round" />
              <circle cx="26" cy="37" r="8" />
            </svg>
          </TabText>
        </Tab>
      </Tabs>

      <Averages>
        <AveragePicker>
          <Select aria-label="主图指标">
            <option>均线</option>
          </Select>
          <Triangle width={20} height={15} />
        </AveragePicker>
        <AverageList>
          <AverageName>月线</AverageName>
          <Tint $color={colors.ma5}>MA5:2022.38</Tint>
          <Tint $color={colors.ma10}>10:2622.29</Tint>
          <Tint $color={colors.ma20}>20:3710.77</Tint>
          <Break />
          <Tint $color={colors.ma30}>30:3284.82</Tint>
          <Tint $color={colors.ma60}>60:2308.32</Tint>
          <Tint $color={colors.ma120}>120:1979.06</Tint>
          <Break />
          <Tint $color={colors.ma250}>250:--</Tint>
        </AverageList>
        <ChipsButton>筹码</ChipsButton>
      </Averages>

      <Panel $height={735}>
        <Watermark>同花顺</Watermark>
        <AxisLabel $top={2}>6624.12</AxisLabel>
        <AxisLabel $top={155}>5092.63</AxisLabel>
        <AxisLabel $top={339}>3561.14</AxisLabel>
        <AxisLabel $top={522}>2029.64</AxisLabel>
        <AxisLabel $top={676}>498.15</AxisLabel>
        <CandlePlot />
        <Extreme $top={4} $left={150}>
          <LeftArrow />
          6124.04
        </Extreme>
        <Extreme $top={696} $left={30}>
          <LeftArrow />
          998.23
        </Extreme>
        <RoundButton $left="0px" aria-label="展开">
          <svg width="38" height="40" viewBox="0 0 38 40" fill="none" stroke="#555" strokeWidth="4">
            <path d="M3 2L20 20L3 38M18 2L35 20L18 38" />
          </svg>
        </RoundButton>
        <RoundButton $left="171px" aria-label="全屏">
          <svg width="40" height="40" viewBox="0 0 40 40" fill="none" stroke="#555" strokeWidth="4">
            <path d="M3 16V3H19M37 24V37H21" />
          </svg>
        </RoundButton>
        <Crosshair />
      </Panel>

      <Dates>
        <span>2004/1</span>
        <DateBubble>2008/12/31</DateBubble>
        <MiddleDate>2015/08/31</MiddleDate>
        <Smear width="175" height="38" viewBox="0 0 175 38">
          <defs>
            <linearGradient id="fade" x1="0" y1="0" x2="0" y2="1">
              <stop offset="0" stopColor="#999" stopOpacity="0.050" />
              <stop offset="0.800" stopColor="#999" stopOpacity="0.700" />
              <stop offset="1" stopColor="#999" />
            </linearGradient>
          </defs>
          {smears.map(([x, width]) => (
            <rect key={x} x={x} y="0" width={width} height="37" rx="2" fill="url(#fade)" />
          ))}
          <path d="M110 13H173" stroke="#c8c8c8" strokeWidth="2" />
        </Smear>
      </Dates>

      <Panel $height={251}>
        <PowerPlot />
        <Legend $top={9}>
          <Picker>
            <Select aria-label="副图指标一">
              <option>主力吸筹</option>
            </Select>
            <Triangle width={20} height={15} />
          </Picker>
          <HelpButton $left={18} aria-label="主力吸筹 说明">
            <Question color="#999" />
          </HelpButton>
          <Readings>
            <Tint $color="#dc3c3c">主力进场:0.00</Tint>
            <Tint $color="#0c8c0c">洗盘:0.00</Tint>
            <span>VAR6:0.00</span>
          </Readings>
        </Legend>
        <AxisLabel $top={131}>20.12</AxisLabel>
        <Crosshair />
      </Panel>

      <Panel $height={252} $gap={19}>
        <AxisLabel $top={131}>119.62</AxisLabel>
        <MacdPlot />
        <Legend $top={12}>
          <Picker>
            <Select aria-label="副图指标二">
              <option>MACD</option>
            </Select>
            <Triangle width={20} height={15} />
          </Picker>
          <HelpButton $left={16} aria-label="MACD 说明">
            <Question color="#999" />
          </HelpButton>
          <Readings>
            <span>(12, 26, 9):</span>
            <Tint $color={colors.ma5}>MACD:-730.54</Tint>
            <Tint $color={colors.ma5}>DIFF:-247.20</Tint>
          </Readings>
        </Legend>
        <SecondReading>DEA:118.07</SecondReading>
        <PriceLine />
        <Crosshair />
        <LevelBubble>1026.10</LevelBubble>
      </Panel>
      <PageEnd />

      <Bottom>
        <BottomNav>
          <BottomLink href="#index">
            <BoxIcon glyph="买" color="#e8374a" />
            买指数
          </BottomLink>
          <BottomLink href="#futures">
            <BoxIcon glyph="期" color="#9c9c9c" />
            买期货
          </BottomLink>
          <BottomLink href="#community">
            <CommunityIcon />
            社区
          </BottomLink>
          <BottomLink href="#add">
            <PlusIcon />
            加自选
          </BottomLink>
          <BottomLink href="#more">
            <MenuIcon />
            功能
          </BottomLink>
        </BottomNav>
        <HomeBar />
      </Bottom>
    </>
  )
}
